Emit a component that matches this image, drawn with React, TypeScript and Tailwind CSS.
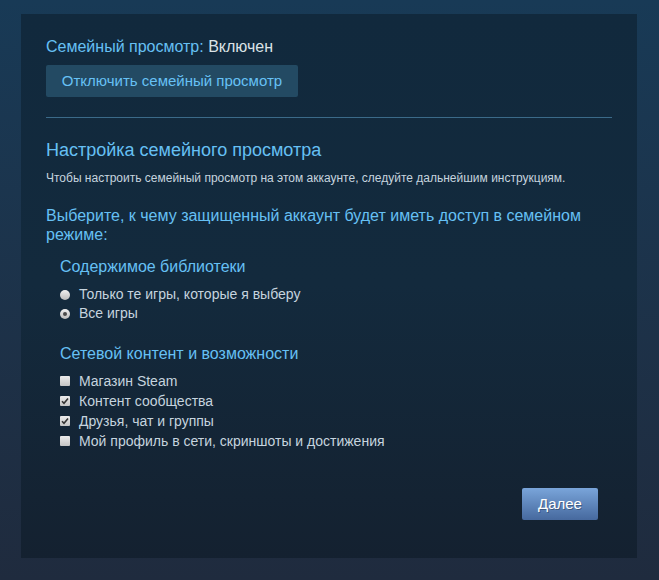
import React from "react"

function Radio({ checked, label }: { checked?: boolean; label: string }) {
    return (
        <div className="flex items-center h-[19px]">
            <span className="w-[10px] h-[10px] rounded-full bg-gradient-to-b from-[#f0f0f0] to-[#bcbcbc] flex items-center justify-center shrink-0">
                {checked && <span className="w-[4px] h-[4px] rounded-full bg-[#4a4a4a]" />}
            </span>
            <span className="ml-[9px] text-[14px] text-[#c6d4df]">{label}</span>
        </div>
    )
}

function Check({ checked, label }: { checked?: boolean; label: string }) {
    return (
        <div className="flex items-center h-[20px]">
            <span className="w-[10px] h-[10px] rounded-[1px] bg-gradient-to-b from-[#ececec] to-[#c4c4c4] flex items-center justify-center shrink-0">
                {checked && (
                    <svg width="8" height="8" viewBox="0 0 8 8">
                        <path d="M1 4.2 L3 6.3 L7 1.5" fill="none" stroke="#333" strokeWidth="1.6" />
                    </svg>
                )}
            </span>
            <span className="ml-[9px] text-[14px] text-[#c6d4df]">{label}</span>
        </div>
    )
}

export default function App() {
    return (
        <div className="w-[659px] h-[580px] pt-[14px] pl-[21px] bg-gradient-to-b from-[#183a56] to-[#1f2b3e] font-['Liberation_Sans',Arial,sans-serif]">
            <div className="w-[616px] h-[544px] px-[25px] pt-[24px] bg-gradient-to-b from-[#11293d] via-[#132a3d] to-[#142130] flex flex-col">
                <div className="text-[16px] leading-[18px] text-[#66c0f4]">
                    Семейный просмотр: <span className="text-[#dbe2e6]">Включен</span>
                </div>
                <button className="mt-[9px] w-[252px] h-[32px] rounded-[2px] bg-[#234a63] text-[15px] text-[#67c1f5] text-center">
                    Отключить семейный просмотр
                </button>
                <div className="mt-[20px] h-px bg-[#3b6a89]" />

                <h2 className="mt-[21px] text-[18px] leading-[22px] text-[#66c0f4]">Настройка семейного просмотра</h2>
                <p className="mt-[10px] text-[12px] leading-[14px] text-[#c6d4df]">
                    Чтобы настроить семейный просмотр на этом аккаунте, следуйте дальнейшим инструкциям.
                </p>
                <p className="mt-[21px] text-[16px] leading-[19px] text-[#66c0f4] pr-[20px]">
                    Выберите, к чему защищенный аккаунт будет иметь доступ в семейном режиме:
                </p>

                <div className="pl-[14px]">
                    <h3 className="mt-[14px] text-[16px] leading-[18px] text-[#66c0f4]">Содержимое библиотеки</h3>
                    <div className="mt-[9px]">
                        <Radio label="Только те игры, которые я выберу" />
                        <Radio checked label="Все игры" />
                    </div>

                    <h3 className="mt-[22px] text-[16px] leading-[18px] text-[#66c0f4]">Сетевой контент и возможности</h3>
                    <div className="mt-[8px]">
                        <Check label="Магазин Steam" />
                        <Check checked label="Контент сообщества" />
                        <Check checked label="Друзья, чат и группы" />
                        <Check label="Мой профиль в сети, скриншоты и достижения" />
                    </div>
                </div>

                <div className="mt-[37px] flex justify-end pr-[14px]">
                    <button className="w-[76px] h-[32px] rounded-[2px] bg-gradient-to-b from-[#7aa5da] to-[#46699e] text-[15px] text-white [text-shadow:1px_1px_0_rgba(0,0,0,0.3)]">
                        Далее
                    </button>
                </div>
            </div>
        </div>
    )
}
